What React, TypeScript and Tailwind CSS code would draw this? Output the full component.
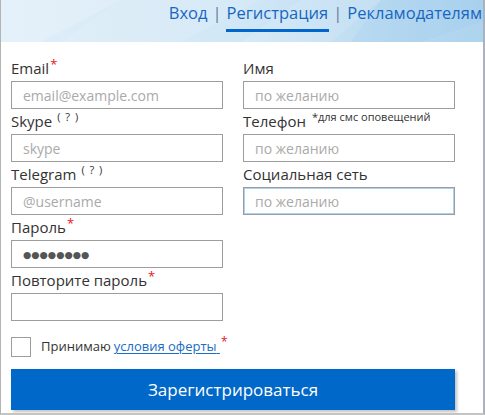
import React from "react";

function Field({
  label,
  extra,
  placeholder,
  value,
  dots,
  focused,
}: {
  label: string;
  extra?: React.ReactNode;
  placeholder?: string;
  value?: string;
  dots?: boolean;
  focused?: boolean;
}) {
  return (
    <div className="flex flex-col">
      <div className="h-[25px] leading-[25px] text-[15px] text-[#333] whitespace-nowrap">
        {label}
        {extra}
      </div>
      <input
        type="text"
        placeholder={placeholder}
        defaultValue={value}
        readOnly={dots}
        className={
          "h-[28px] w-[212px] border border-[#9d9d9d] bg-white pl-[11px] text-[#555] placeholder:text-[#aaa] outline-none " +
          (dots
            ? "text-[9.5px] text-[#6a6a6a] font-['DejaVu_Sans'] "
            : "text-[14px] ") +
          (focused ? "shadow-[inset_0_0_0_1px_#a9d1f0]" : "")
        }
      />
    </div>
  );
}

const Req = () => (
  <span className="relative -top-[5px] ml-[1px] text-[13px] text-[#e8141b]">*</span>
);
const Q = () => (
  <span className="relative -top-[6px] ml-[5px] text-[11px] tracking-[1px] text-[#333]">
    ( ? )
  </span>
);

export default function App() {
  return (
    <div
      className="w-[485px] h-[415px] bg-white border-l border-l-[#b4b4b4] border-r-2 border-r-[#aab3bb] border-b-2 border-b-[#c4c4c4] flex flex-col overflow-hidden"
      style={{ fontFamily: '"Open Sans", "Noto Sans", sans-serif' }}
    >
      <div className="relative h-[42px] bg-gradient-to-r from-[#e0eef9] via-[#d1e7f6] to-[#add3ee] overflow-hidden">
        <svg className="absolute inset-0" width="485" height="42" viewBox="0 0 485 42">
          <polygon points="0,0 120,0 40,42 0,42" fill="#ffffff" opacity="0.18" />
          <polygon points="120,0 260,0 180,42 60,42" fill="#ffffff" opacity="0.1" />
          <polygon points="300,0 380,0 330,42 240,42" fill="#ffffff" opacity="0.12" />
          <polygon points="380,0 485,0 485,20 420,42 350,42" fill="#8ec3e8" opacity="0.15" />
        </svg>
        <nav className="relative flex justify-end pr-[1px] pt-[2px] text-[16.5px] leading-[22px] text-[#1867bf] whitespace-nowrap">
          <a className="cursor-pointer">Вход</a>
          <span className="mx-[5px] text-[#5c7c9c]">|</span>
          <a className="cursor-pointer border-b-[3px] border-[#0066cc] pb-[5px] px-[1px] -mx-[1px]">Регистрация</a>
          <span className="mx-[5px] text-[#5c7c9c]">|</span>
          <a className="cursor-pointer">Рекламодателям</a>
        </nav>
      </div>

      <div className="flex flex-col pl-[10px] pt-[14px]">
        <div className="flex gap-[20px]">
          <div className="flex flex-col w-[212px]">
            <Field label="Email" extra={<Req />} placeholder="email@example.com" />
            <Field label="Skype" extra={<Q />} placeholder="skype" />
            <Field label="Telegram" extra={<Q />} placeholder="@username" />
            <Field label="Пароль" extra={<Req />} value="●●●●●●●●" dots />
            <Field label="Повторите пароль" extra={<Req />} />
          </div>
          <div className="flex flex-col w-[212px]">
            <Field label="Имя" placeholder="по желанию" />
            <Field
              label="Телефон"
              extra={
                <span className="relative -top-[6px] ml-[6px] text-[11px] text-[#333]">
                  *для смс оповещений
                </span>
              }
              placeholder="по желанию"
            />
            <Field label="Социальная сеть" placeholder="по желанию" focused />
          </div>
        </div>

        <label className="mt-[16px] flex items-center h-[20px] text-[13px] text-[#333]">
          <span className="w-[20px] h-[20px] border border-[#9d9d9d] bg-white" />
          <span className="ml-[10px]">Принимаю </span>
          <a className="ml-[3px] text-[#1b6cc4] underline underline-offset-[2px] cursor-pointer">
            условия оферты{"\u00a0"}
          </a>
          <span className="relative -top-[5px] ml-[1px] text-[12px] text-[#e8141b]">*</span>
        </label>

        <button className="mt-[12px] w-[444px] h-[41px] bg-[#0068c8] text-white text-[17px] shadow-[2px_2px_3px_rgba(0,0,0,0.25)]">
          Зарегистрироваться
        </button>
      </div>
    </div>
  );
}
